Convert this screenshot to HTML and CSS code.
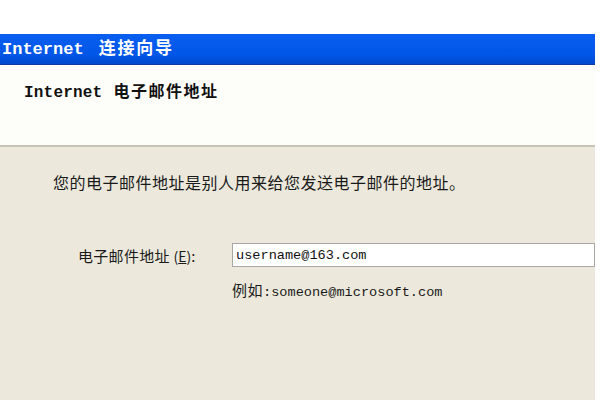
FILE: index.html
```html
<!DOCTYPE html>
<html lang="zh-CN">
<head>
  <meta charset="UTF-8">
  <title>Internet 连接向导</title>
  <link rel="stylesheet" href="styles.css">
</head>
<body>
  <div class="window">
    <div class="titlebar">
      <span class="latin">Internet</span> <span class="cjk">连接向导</span>
    </div>
    <div class="header">
      <h1><span class="latin">Internet</span> <span class="cjk">电子邮件地址</span></h1>
    </div>
    <div class="content">
      <p class="intro">您的电子邮件地址是别人用来给您发送电子邮件的地址。</p>
      <div class="field">
        <label for="email">电子邮件地址 <span class="key">(<u>E</u>)</span>:</label>
        <input id="email" type="text" value="username@163.com">
      </div>
      <div class="hint"><span class="cjk">例如</span>:someone@microsoft.com</div>
    </div>
  </div>
</body>
</html>
```

FILE: styles.css
```css
html,body{
  margin: 0;
  padding: 0;
}
body{
  background: #fff;
  height: 400px;
  overflow: hidden;
}
.window{
  width: 595px;
  margin-top: 34px;
  overflow: hidden;
}
.titlebar{
  height: 30px;
  line-height: 30px;
  padding-left: 2px;
  color: #fff;
  background: linear-gradient(#0a5ef0, #0056e6 70%, #0049cc);
  border-bottom: 1px solid #0d3aa0;
  white-space: nowrap;
}
.titlebar .latin{
  font: bold 17px "Liberation Mono", monospace;
}
.titlebar .cjk{
  font: bold 17px "Noto Sans CJK SC", sans-serif;
  letter-spacing: 1.8px;
  margin-left: 11px;
}
.header{
  height: 80px;
  background: #fdfefa;
  border-bottom: 2px solid #c7c4b6;
}
.header h1{
  margin: 0;
  padding: 13px 0 0 24px;
  line-height: 20px;
  font-size: 16px;
  color: #111;
  white-space: nowrap;
}
.header .latin{
  font: bold 16px "Liberation Mono", monospace;
  letter-spacing: 0.2px;
}
.header .cjk{
  font: bold 16px "Noto Sans CJK SC", sans-serif;
  letter-spacing: 1.5px;
  margin-left: 7px;
}
.content{
  height: 228px;
  background: #ece9dc;
  padding: 25px 0 0 53px;
  color: #1a1a1a;
  font-family: "Noto Sans CJK SC", sans-serif;
}
.intro{
  margin: 0;
  font-size: 16px;
  line-height: 20px;
  letter-spacing: 0.5px;
}
.field{
  display: flex;
  align-items: center;
  margin-top: 51px;
  padding-left: 25px;
}
.field label{
  width: 154px;
  font-size: 15px;
  letter-spacing: 0.3px;
  flex-shrink: 0;
}
.field .key{
  font-size: 14px;
  letter-spacing: 0;
}
.field input{
  box-sizing: border-box;
  width: 380px;
  height: 24px;
  margin: 0;
  padding: 0 3px;
  border: 1px solid #a9a8a2;
  background: #fff;
  font: 13.6px "Liberation Mono", monospace;
  color: #111;
  outline: none;
}
.hint{
  margin-top: 12px;
  padding-left: 179px;
  font: 13.6px/18px "Liberation Mono", monospace;
}
.hint .cjk{
  font: 15px "Noto Sans CJK SC", sans-serif;
  letter-spacing: 0.5px;
}
```
